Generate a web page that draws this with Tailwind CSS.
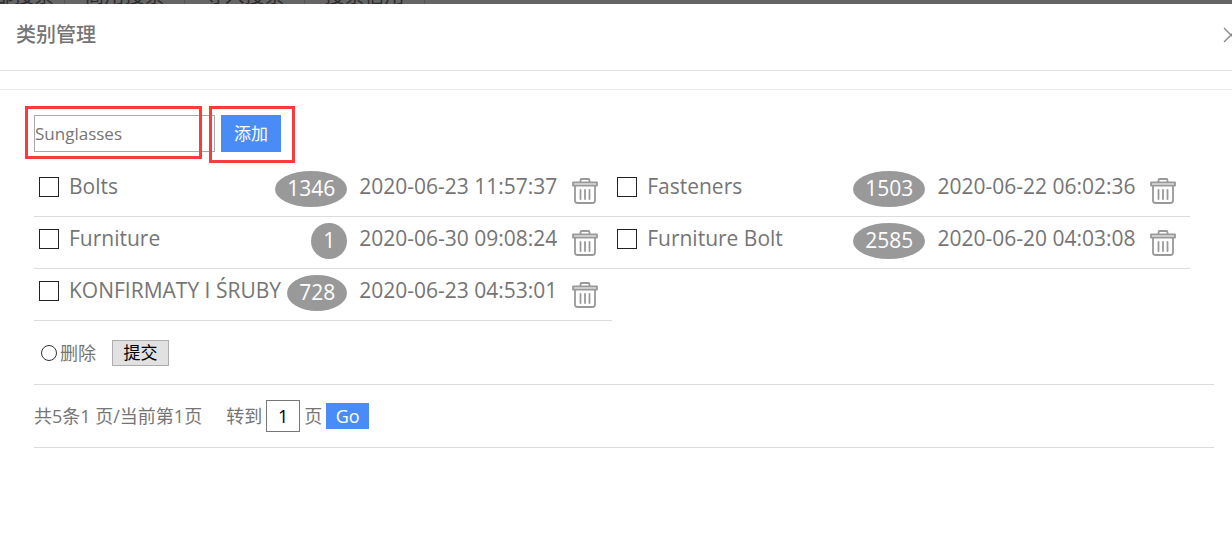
<!DOCTYPE html>
<html lang="zh-CN">
<head>
    <meta charset="UTF-8">
    <meta name="viewport" content="width=device-width, initial-scale=1.0">
    <title>类别管理</title>
    <script src="https://cdn.jsdelivr.net/npm/@tailwindcss/browser@4"></script>
    <style>
        body { font-family: 'Open Sans', 'Noto Sans CJK SC', sans-serif; }
    </style>
</head>
<body class="bg-white text-[#757575]">
    <!-- Dimmed page behind the dialog -->
    <nav class="flex h-1 items-end overflow-hidden bg-[#656565] text-xl leading-4 text-[#2c2c2c]">
        <span class="-ml-9 flex w-[101px] shrink-0 justify-center border-r border-[#555] whitespace-nowrap">全部搜索</span>
        <span class="w-30 shrink-0 border-r border-[#555] text-center">商用搜索</span>
        <span class="w-30 shrink-0 border-r border-[#555] text-center">导入搜索</span>
        <span class="w-30 shrink-0 border-r border-[#555] text-center">搜索信用</span>
    </nav>

    <main>
        <header class="flex h-[67px] items-center justify-between overflow-hidden border-b border-[#e3e3e3] pb-1 pl-4">
            <h1 class="text-xl font-medium">类别管理</h1>
            <button type="button" aria-label="关闭" class="-mr-2 text-[#888]">
                <svg width="17" height="16" viewBox="0 0 17 16" fill="none" stroke="currentColor" stroke-width="1.3"><path d="M1 1l14 14M15 1L1 15"/></svg>
            </button>
        </header>
        <div class="h-[19px] border-b border-[#ececec]"></div>

        <div class="pr-[18px] pl-[34px]">
            <form class="relative flex gap-[6px] pt-[25px]">
                <input type="text" value="Sunglasses" aria-label="类别名称" class="h-[37px] w-[181px] border border-[#a9a9a9] text-[17px]">
                <button type="button" class="h-[37px] w-[60px] bg-[#4a8cf7] text-[17px] text-white">添加</button>
                <!-- Highlight frames -->
                <div class="pointer-events-none absolute top-4 -left-[9px] h-[53px] w-[177px] border-3 border-[#f73c3c]"></div>
                <div class="pointer-events-none absolute top-4 left-[175px] h-[57px] w-[86px] border-3 border-[#f73c3c]"></div>
            </form>

            <ul id="category-list" class="flex flex-wrap pt-[13px] text-[21px]"></ul>

            <form class="flex h-16 items-center border-b border-[#dcdcdc] pl-[7px] text-lg">
                <input type="radio" id="delete" class="size-4 appearance-none rounded-full border border-[#333]">
                <label for="delete" class="pl-[3px]">删除</label>
                <button type="button" class="ml-4 h-[26px] w-[57px] border border-[#adadad] bg-[#e1e1e1] text-[17px] leading-5 text-black">提交</button>
            </form>

            <form class="flex h-[63px] items-center border-b border-[#dcdcdc] text-lg">
                <span>共5条1 页/当前第1页</span>
                <label for="page" class="ml-6">转到</label>
                <input type="text" id="page" value="1" class="mx-1 h-8 w-[34px] border border-[#777] text-center text-black">
                <span>页</span>
                <button type="button" class="ml-1 h-[26px] w-[43px] bg-[#4a8cf7] leading-5 text-white">Go</button>
            </form>
        </div>
    </main>

    <script>
        const categories = [
            { name: 'Bolts', count: 1346, date: '2020-06-23 11:57:37' },
            { name: 'Fasteners', count: 1503, date: '2020-06-22 06:02:36' },
            { name: 'Furniture', count: 1, date: '2020-06-30 09:08:24' },
            { name: 'Furniture Bolt', count: 2585, date: '2020-06-20 04:03:08' },
            { name: 'KONFIRMATY I ŚRUBY', count: 728, date: '2020-06-23 04:53:01' },
        ];

        document.getElementById('category-list').innerHTML = categories.map((item, i) => `
            <li class="flex h-[52px] w-[49%] items-center border-b border-[#dcdcdc] pr-[14px] pb-1 pl-[5px] whitespace-nowrap">
                <span class="flex w-0 grow items-center pb-1">
                    <input type="checkbox" id="category-${i}" class="size-5 shrink-0 appearance-none border border-[#222]">
                    <label for="category-${i}" class="pl-[10px]">${item.name}</label>
                </span>
                <span class="flex h-9 min-w-9 items-center justify-center rounded-[50%] bg-[#999] px-3 text-white">${item.count}</span>
                <time class="w-[225px] pb-1 pl-3">${item.date}</time>
                <button type="button" aria-label="删除 ${item.name}" class="pt-1 text-[#999]">
                    <svg width="26" height="26" viewBox="0 0 26 26" fill="none" stroke="currentColor" stroke-width="1.8" stroke-linejoin="round" stroke-linecap="round">
                        <path d="M1 4.5h24v3H1zM8.5 4.5V2.2q0-1.2 1.2-1.2h6.6q1.2 0 1.2 1.2v2.3M3 7.5v15q0 2.5 2.5 2.5h15q2.5 0 2.5-2.5v-15M8.5 12v9M13 12v9M17.5 12v9"/>
                    </svg>
                </button>
            </li>`).join('');
    </script>
</body>
</html>
